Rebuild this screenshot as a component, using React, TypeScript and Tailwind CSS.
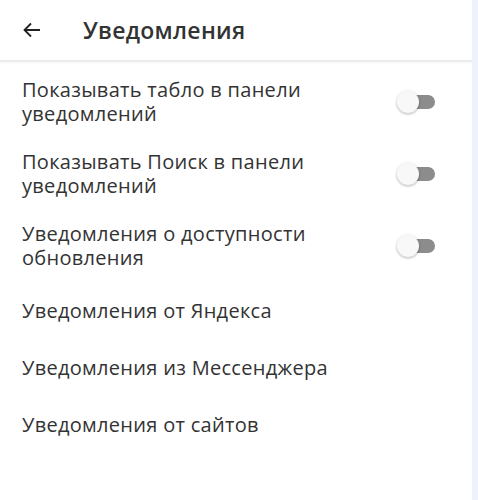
import React from 'react'

const toggles = [
  'Показывать табло в панели уведомлений',
  'Показывать Поиск в панели уведомлений',
  'Уведомления о доступности обновления',
]

const links = [
  'Уведомления от Яндекса',
  'Уведомления из Мессенджера',
  'Уведомления от сайтов',
]

function Toggle() {
  return (
    <div className="relative w-[40px] h-[22px] shrink-0">
      <div className="absolute left-[12px] top-[4px] w-[26px] h-[14px] rounded-full bg-[#8c8c8c]" />
      <div className="absolute left-0 top-0 w-[22px] h-[22px] rounded-full bg-[#f8f8f8] shadow-[0_1px_3px_rgba(0,0,0,0.3)]" />
    </div>
  )
}

export default function App() {
  return (
    <div
      className="flex w-[478px] h-[500px] bg-white text-[#333]"
      style={{ fontFamily: '"Open Sans", "Noto Sans", sans-serif' }}
    >
      <div className="flex-1 flex flex-col">
        <div className="h-[62px] flex items-center border-b-2 border-[#ececec] shadow-[0_1px_2px_rgba(0,0,0,0.04)]">
          <svg className="ml-[22px] w-[20px] h-[20px]" viewBox="0 0 20 20" fill="none" stroke="#222" strokeWidth={1.8}>
            <path d="M18 10H3M9 3.5L2.5 10L9 16.5" />
          </svg>
          <span className="ml-[41px] text-[23px] font-semibold tracking-[0.3px] text-[#333]">Уведомления</span>
        </div>
        <div className="pt-[4px] flex flex-col">
          {toggles.map((t) => (
            <div key={t} className="flex items-center justify-between pl-[22px] pr-[35px] py-3">
              <span className="text-[20px] leading-[24px] tracking-[0.3px] w-[320px]">{t}</span>
              <Toggle />
            </div>
          ))}
          {links.map((t) => (
            <div key={t} className="flex items-center h-[57px] pl-[22px] text-[20px] tracking-[0.3px]">
              {t}
            </div>
          ))}
        </div>
      </div>
      <div className="w-[6px] bg-[#eef2fb]" />
    </div>
  )
}
